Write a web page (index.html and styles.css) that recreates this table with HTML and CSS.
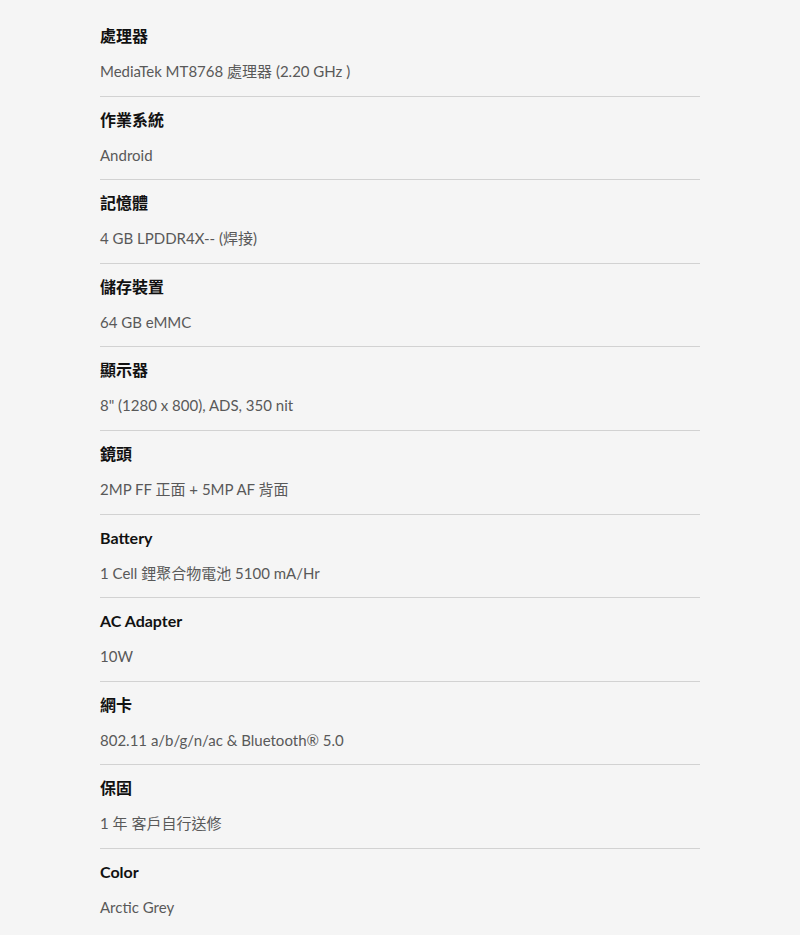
FILE: index.html
```html
<!DOCTYPE html>
<html lang="zh-Hant">
<head>
    <meta charset="UTF-8">
    <meta name="viewport" content="width=device-width, initial-scale=1.0">
    <title>規格</title>
    <link rel="stylesheet" href="styles.css">
</head>
<body>
    <div class="specs">
        <div class="spec-item">
            <div class="spec-title">處理器</div>
            <div class="spec-value">MediaTek MT8768 處理器 (2.20 GHz )</div>
        </div>
        <div class="spec-item">
            <div class="spec-title">作業系統</div>
            <div class="spec-value">Android</div>
        </div>
        <div class="spec-item">
            <div class="spec-title">記憶體</div>
            <div class="spec-value">4 GB LPDDR4X-- (焊接)</div>
        </div>
        <div class="spec-item">
            <div class="spec-title">儲存裝置</div>
            <div class="spec-value">64 GB eMMC</div>
        </div>
        <div class="spec-item">
            <div class="spec-title">顯示器</div>
            <div class="spec-value">8" (1280 x 800), ADS, 350 nit</div>
        </div>
        <div class="spec-item">
            <div class="spec-title">鏡頭</div>
            <div class="spec-value">2MP FF 正面 + 5MP AF 背面</div>
        </div>
        <div class="spec-item">
            <div class="spec-title">Battery</div>
            <div class="spec-value">1 Cell 鋰聚合物電池 5100 mA/Hr</div>
        </div>
        <div class="spec-item">
            <div class="spec-title">AC Adapter</div>
            <div class="spec-value">10W</div>
        </div>
        <div class="spec-item">
            <div class="spec-title">網卡</div>
            <div class="spec-value">802.11 a/b/g/n/ac &amp; Bluetooth® 5.0</div>
        </div>
        <div class="spec-item">
            <div class="spec-title">保固</div>
            <div class="spec-value">1 年 客戶自行送修</div>
        </div>
        <div class="spec-item">
            <div class="spec-title">Color</div>
            <div class="spec-value">Arctic Grey</div>
        </div>
    </div>
</body>
</html>
```

FILE: styles.css
```css
body {
    margin: 0;
    background: #f5f5f5;
    font-family: Lato, "Noto Sans CJK TC", sans-serif;
    font-size: 15px;
}
.specs {
    width: 600px;
    margin: 0 100px;
    padding-top: 13px;
}
.spec-item {
    padding: 11px 0 12.6px;
    border-bottom: 1px solid #d2d2d2;
}
.spec-item:last-child {
    border-bottom: none;
}
.spec-title {
    line-height: 24px;
    margin-bottom: 11px;
    font-size: 16px;
    font-weight: bold;
    color: #111;
}
.spec-value {
    line-height: 24px;
    color: #595959;
}
```
